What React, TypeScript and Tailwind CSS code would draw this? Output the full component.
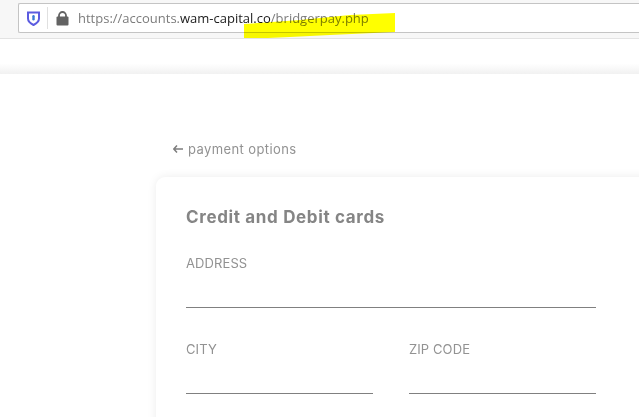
export default function App() {
  const label = "text-[13px] leading-[16px] text-[#929292] font-['Inter',sans-serif] tracking-[0.1px]";
  return (
    <div className="relative h-[417px] w-[639px] overflow-hidden bg-white">
      <div className="h-[39px] border-b border-[#e3e3e3] bg-[#f7f7f7] pl-[18px] pt-[3px]">
        <div className="flex h-[30px] items-center rounded-l-[2px] border border-r-0 border-[#c4c4c4] bg-white">
          <div className="flex w-[28px] justify-center pl-[1px]">
            <svg width="13" height="15" viewBox="0 0 13 15">
              <path d="M1 1.500h11v6c0 3-2.500 5-5.500 6.500C3.500 12.500 1 10.500 1 7.500z" fill="none" stroke="#5b5be0" strokeWidth="2" />
              <rect x="5.300" y="4" width="2.400" height="5.500" rx="1.200" fill="#3a7bd5" />
            </svg>
          </div>
          <div className="h-[22px] w-px bg-[#e0e0e0]" />
          <svg className="ml-[8px]" width="13" height="15" viewBox="0 0 13 15">
            <path d="M3 6V4.500a3.500 3.500 0 0 1 7 0V6" fill="none" stroke="#636363" strokeWidth="1.800" />
            <rect x="0.500" y="5.500" width="12" height="9" rx="1" fill="#636363" />
          </svg>
          <div className="ml-[9px] whitespace-nowrap font-['Open_Sans',sans-serif] text-[13px] leading-[18px] text-[#7c7c7c]">
            https://accounts.<span className="text-[#1a1a1a]">wam-capital.co</span>/bridgerpay.php
          </div>
        </div>
      </div>
      <svg className="absolute left-[244px] top-[12px] mix-blend-multiply" width="152" height="27" viewBox="0 0 152 27">
        <path d="M0 12 L56 8 L106 3 L151 1 L151 20 L86 23 L46 25 L24 26 L0 26 Z" fill="#ffff00" />
      </svg>

      <div className="h-[35px] bg-gradient-to-b from-white from-70% to-[#f1f1f1]" />

      <div className="pl-[156px] pt-[66px]">
        <div className="flex items-center gap-[5px] pl-[17px] font-['Inter',sans-serif] text-[13px] leading-[18px] tracking-[0.4px] text-[#929292]">
          <svg width="10" height="8" viewBox="0 0 10 8">
            <path d="M4 0.500 L0.800 4 L4 7.500 M1 4 H10" fill="none" stroke="#7d7d7d" strokeWidth="1.500" />
          </svg>
          <span>payment options</span>
        </div>
        <div className="mt-[19px] h-[260px] w-[520px] rounded-[9px] bg-white pl-[30px] pr-[80px] pt-[30px] shadow-[0_0_10px_rgba(0,0,0,0.08)]">
          <h1 className="font-['Inter',sans-serif] text-[17px] font-bold leading-[20px] tracking-[0.65px] text-[#858585]">Credit and Debit cards</h1>
          <div className="mt-[28px]">
            <div className={label}>ADDRESS</div>
            <div className="mt-[36px] h-px bg-[#808080]" />
          </div>
          <div className="mt-[33px] flex gap-[36px]">
            <div className="w-[187px]">
              <div className={label}>CITY</div>
              <div className="mt-[36px] h-px bg-[#808080]" />
            </div>
            <div className="w-[187px]">
              <div className={label}>ZIP CODE</div>
              <div className="mt-[36px] h-px bg-[#808080]" />
            </div>
          </div>
        </div>
      </div>
    </div>
  );
}
